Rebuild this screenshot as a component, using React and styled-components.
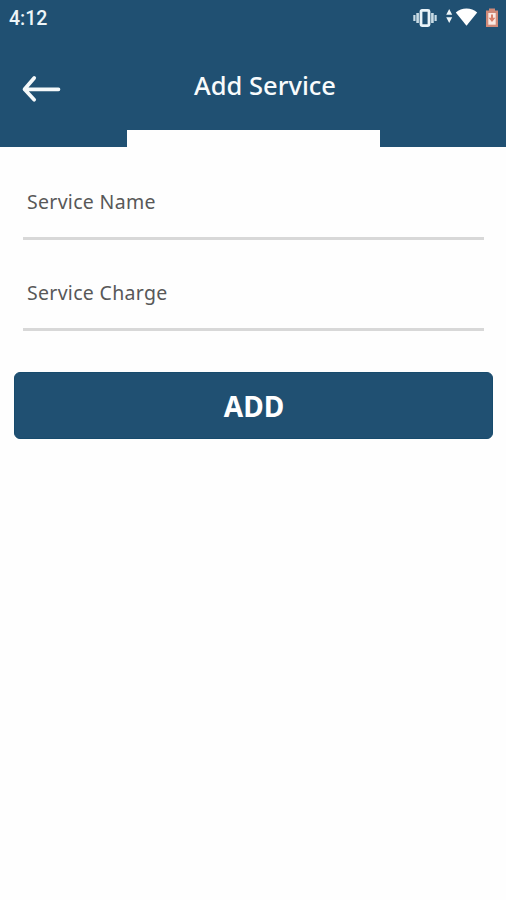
import React from "react";
import styled, { createGlobalStyle } from "styled-components";

const GlobalStyle = createGlobalStyle`
  * { box-sizing: border-box; }
  body { margin: 0; background: #fefefe; font-family: "Noto Sans", "Open Sans", sans-serif; }
`;

const Screen = styled.main`
  width: 506px;
  height: 900px;
  overflow: hidden;
  background: #fefefe;
`;

const Header = styled.header`
  height: 147px;
  display: flex;
  flex-direction: column;
  background: #205072;
`;

const StatusBar = styled.div`
  height: 36px;
  padding: 0 7px 0 9px;
  display: flex;
  align-items: center;
  justify-content: space-between;
`;

const Clock = styled.span`
  padding-top: 1px;
  color: #eef5f8;
  font: 500 19.5px/36px Roboto, sans-serif;
`;

const StatusIcons = styled.div`
  display: flex;
  align-items: center;
  height: 36px;
`;

const StatusIcon = styled.svg`
  display: block;
  margin-left: ${(p) => p.$gap || 0}px;
`;

const TitleBar = styled.div`
  height: 94px;
  display: grid;
  grid-template-columns: 83px 1fr 59px;
  align-items: start;
`;

const BackButton = styled.button`
  margin: 38px 0 0 21px;
  padding: 0;
  width: 40px;
  height: 30px;
  border: 0;
  background: none;
`;

const Title = styled.h1`
  margin: 31px 0 0;
  color: #f8fbfc;
  font-size: 25.5px;
  font-weight: 500;
  line-height: 36px;
  text-align: center;
  white-space: nowrap;
`;

const TabIndicator = styled.div`
  width: 253px;
  height: 17px;
  margin-left: 127px;
  background: #fefefe;
`;

const Form = styled.form`
  padding: 35px 13px 0 14px;
`;

const Field = styled.label`
  display: block;
  height: ${(p) => p.$height}px;
  margin: 0 9px;
  padding: ${(p) => p.$top}px 4px 0;
  border-bottom: 3px solid #d8d8d8;
  color: #585858;
  font-size: 19.5px;
  font-weight: 450;
  letter-spacing: 0.3px;
  line-height: 28px;
`;

const SubmitButton = styled.button`
  display: block;
  width: 479px;
  height: 67px;
  margin-top: 41px;
  padding: 1px 0 0 1px;
  border: 1px solid #174b6d;
  border-radius: 6px;
  background: #205072;
  color: #fff;
  font-family: inherit;
  font-size: 28px;
  font-weight: 700;
`;

export default function App() {
  return (
    <Screen>
      <GlobalStyle />
      <Header>
        <StatusBar>
          <Clock>4:12</Clock>
          <StatusIcons>
            <StatusIcon width="24" height="20" viewBox="0 0 24 20" fill="#c9dce6">
              <rect x="0.3" y="7" width="2.2" height="6" />
              <rect x="3.3" y="5" width="2.6" height="10" />
              <rect x="8" y="2.4" width="8" height="15.2" rx="1" fill="none" stroke="#e9f3f8" strokeWidth="2.8" />
              <rect x="18.1" y="5" width="2.6" height="10" />
              <rect x="21.5" y="7" width="2.2" height="6" />
            </StatusIcon>
            <StatusIcon $gap={9} width="7" height="20" viewBox="0 0 7 20" fill="#edf5f8">
              <path d="M3.2 1 6.2 6.8H.2zM.2 9.2h6L3.2 15z" />
            </StatusIcon>
            <StatusIcon $gap={2} width="23" height="20" viewBox="0 0 23 20" fill="#fff">
              <path d="M.8 4.4C3.8 1.7 7.4.5 11.5.5s7.7 1.2 10.7 3.9L11.5 17.8z" />
            </StatusIcon>
            <StatusIcon $gap={7} width="14" height="20" viewBox="0 0 14 20">
              <path d="M4 .5h6v2h3v16.5H1V2.5h3z" fill="#d08a79" />
              <path d="M3.3 5h7.4v11.7H3.3z" fill="#faeae4" />
              <path d="M6 6.5h2v3.2h2.4L7 14 3.6 9.7H6z" fill="#d97f69" />
            </StatusIcon>
          </StatusIcons>
        </StatusBar>
        <TitleBar>
          <BackButton aria-label="Back">
            <svg width="40" height="30" viewBox="0 0 40 30" fill="none" stroke="#f5f9fa" strokeWidth="3.7" strokeLinecap="round" strokeLinejoin="round">
              <path d="M37.5 15.3H3.5M13.2 4 3.5 15.3l9.7 10.4" />
            </svg>
          </BackButton>
          <Title>Add Service</Title>
        </TitleBar>
        <TabIndicator />
      </Header>
      <Form onSubmit={(e) => e.preventDefault()}>
        <Field $height={58} $top={6}>Service Name</Field>
        <Field $height={91} $top={39}>Service Charge</Field>
        <SubmitButton>ADD</SubmitButton>
      </Form>
    </Screen>
  );
}
